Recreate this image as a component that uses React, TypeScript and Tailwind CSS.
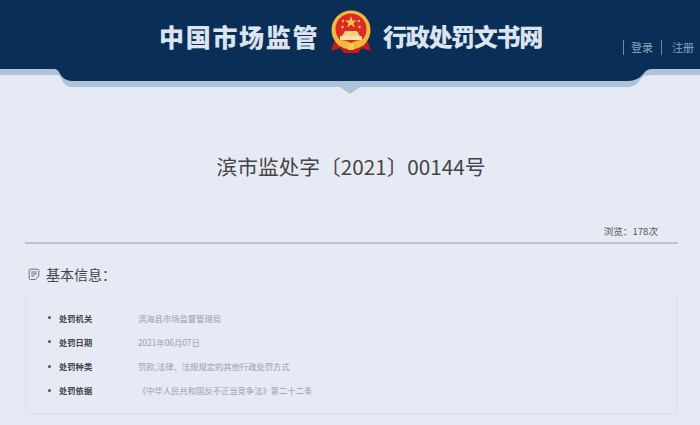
const info = [
  { label: "处罚机关", value: "滨海县市场监督管理局" },
  { label: "处罚日期", value: "2021年06月07日" },
  { label: "处罚种类", value: "罚款,法律、法规规定的其他行政处罚方式" },
  { label: "处罚依据", value: "《中华人民共和国反不正当竞争法》第二十二条" },
];

function Emblem() {
  return (
    <svg width="42" height="44" viewBox="0 0 42 44" className="shrink-0">
      <path d="M4 32 L1 41 L10 38 L14 43 L28 43 L32 38 L41 41 L38 32 Z" fill="#c8171e" />
      <circle cx="21" cy="20" r="19.5" fill="#f0b93a" />
      <circle cx="21" cy="19" r="15.5" fill="#dd2a26" />
      <polygon points="21,6 22.5,10.4 27,10.4 23.4,13 24.8,17.4 21,14.7 17.2,17.4 18.6,13 15,10.4 19.5,10.4" fill="#f6c945" />
      <circle cx="13" cy="11" r="1.2" fill="#f6c945" />
      <circle cx="12.5" cy="17" r="1.2" fill="#f6c945" />
      <circle cx="29" cy="11" r="1.2" fill="#f6c945" />
      <circle cx="29.5" cy="17" r="1.2" fill="#f6c945" />
      <path d="M12 26 L15 21 L27 21 L30 26 Z" fill="#f6d27a" />
      <rect x="10" y="26" width="22" height="4" fill="#fbe3a8" />
      <path d="M5 31 Q12 28 21 33 Q30 28 37 31 L33 36 Q27 34 21 38 Q15 34 9 36 Z" fill="#f0b93a" />
      <rect x="18" y="33" width="6" height="7" fill="#f6c945" />
    </svg>
  );
}

function NoteIcon() {
  return (
    <svg width="12" height="13" viewBox="0 0 12 13" fill="none" stroke="#6b7280" strokeWidth="1" className="shrink-0">
      <path d="M7.5 11.5 H2.5 Q1.2 11.5 1.2 10.2 V2.5 Q1.2 1.2 2.5 1.2 H9.5 Q10.8 1.2 10.8 2.5 V8 Z" />
      <path d="M3.2 4 H8.8 M3.2 6 H8.8 M3.2 8 H6.5" />
    </svg>
  );
}

export default function App() {
  return (
    <div className="h-[425px] w-[700px] overflow-hidden bg-[#e6eaf4] font-['Noto_Sans_CJK_SC',sans-serif]">
      <header className="relative h-[95px]">
        <svg width="700" height="95" viewBox="0 0 700 95" className="absolute inset-0">
          <path d="M340 87 H360 L350 94 Z" fill="#adc3da" />
          <path d="M0 75 H57 Q60 75 62 80 Q65 87 72 87 H628 Q636 87 640 80 Q643 75 650 75 H700 V0 H0 Z" fill="#adc3da" />
          <path d="M0 0 H700 V69 H652 Q647 69 644 73 Q638 81 628 81 H72 Q64 81 60 74 Q58 69 54 69 H0 Z" fill="#0a2f57" />
        </svg>
        <div className="relative flex h-[69px] items-center pl-[159px] pb-[5px]">
          <h1 className="mt-[8px] w-[171px] shrink-0 text-[25px] leading-none font-black tracking-[1.7px] text-[#dbe4f0] whitespace-nowrap">
            中国市场监管
          </h1>
          <Emblem />
          <div className="mt-[8px] ml-[11px] w-[170px] shrink-0 text-[24px] leading-none font-black tracking-[-1.3px] text-[#dbe4f0] whitespace-nowrap">
            行政处罚文书网
          </div>
          <nav className="ml-[70px] mt-[31px] flex items-center text-[11px] leading-[15px] text-[#8fa5bc]">
            <span className="border-l border-[#6f8aa6] pl-[7px] pr-[8px]">登录</span>
            <span className="border-l border-[#6f8aa6] pl-[10px]">注册</span>
          </nav>
        </div>
      </header>

      <main className="px-[25px] pr-[22px]">
        <h2 className="mt-[55px] text-center text-[20.7px] leading-[32px] text-[#444] pr-[1px] whitespace-nowrap">
          滨市监处字〔2021〕00144号
        </h2>
        <div className="mt-[42px] flex justify-end border-b-2 border-[#bcc2d0] pr-[20px] pb-[3px] text-[9.6px] leading-[15px] text-[#555]">
          浏览：178次
        </div>
        <div className="mt-[20px] flex items-center gap-[6px] pl-[3px] text-[14px] leading-[20px] text-[#444]">
          <NoteIcon />
          <span>基本信息：</span>
        </div>
        <ul className="mt-[11px] flex h-[120px] flex-col justify-center gap-[12.3px] border-2 border-[#e0e4ee] pl-[21px] pb-[2px]">
          {info.map((row) => (
            <li key={row.label} className="flex items-center text-[8.3px] leading-[12px]">
              <span className="mr-[8px] h-[3px] w-[3px] rounded-full bg-[#555]" />
              <span className="w-[79px] font-bold text-[#444]">{row.label}</span>
              <span className="text-[#9a9ea8]">{row.value}</span>
            </li>
          ))}
        </ul>
      </main>
    </div>
  );
}
